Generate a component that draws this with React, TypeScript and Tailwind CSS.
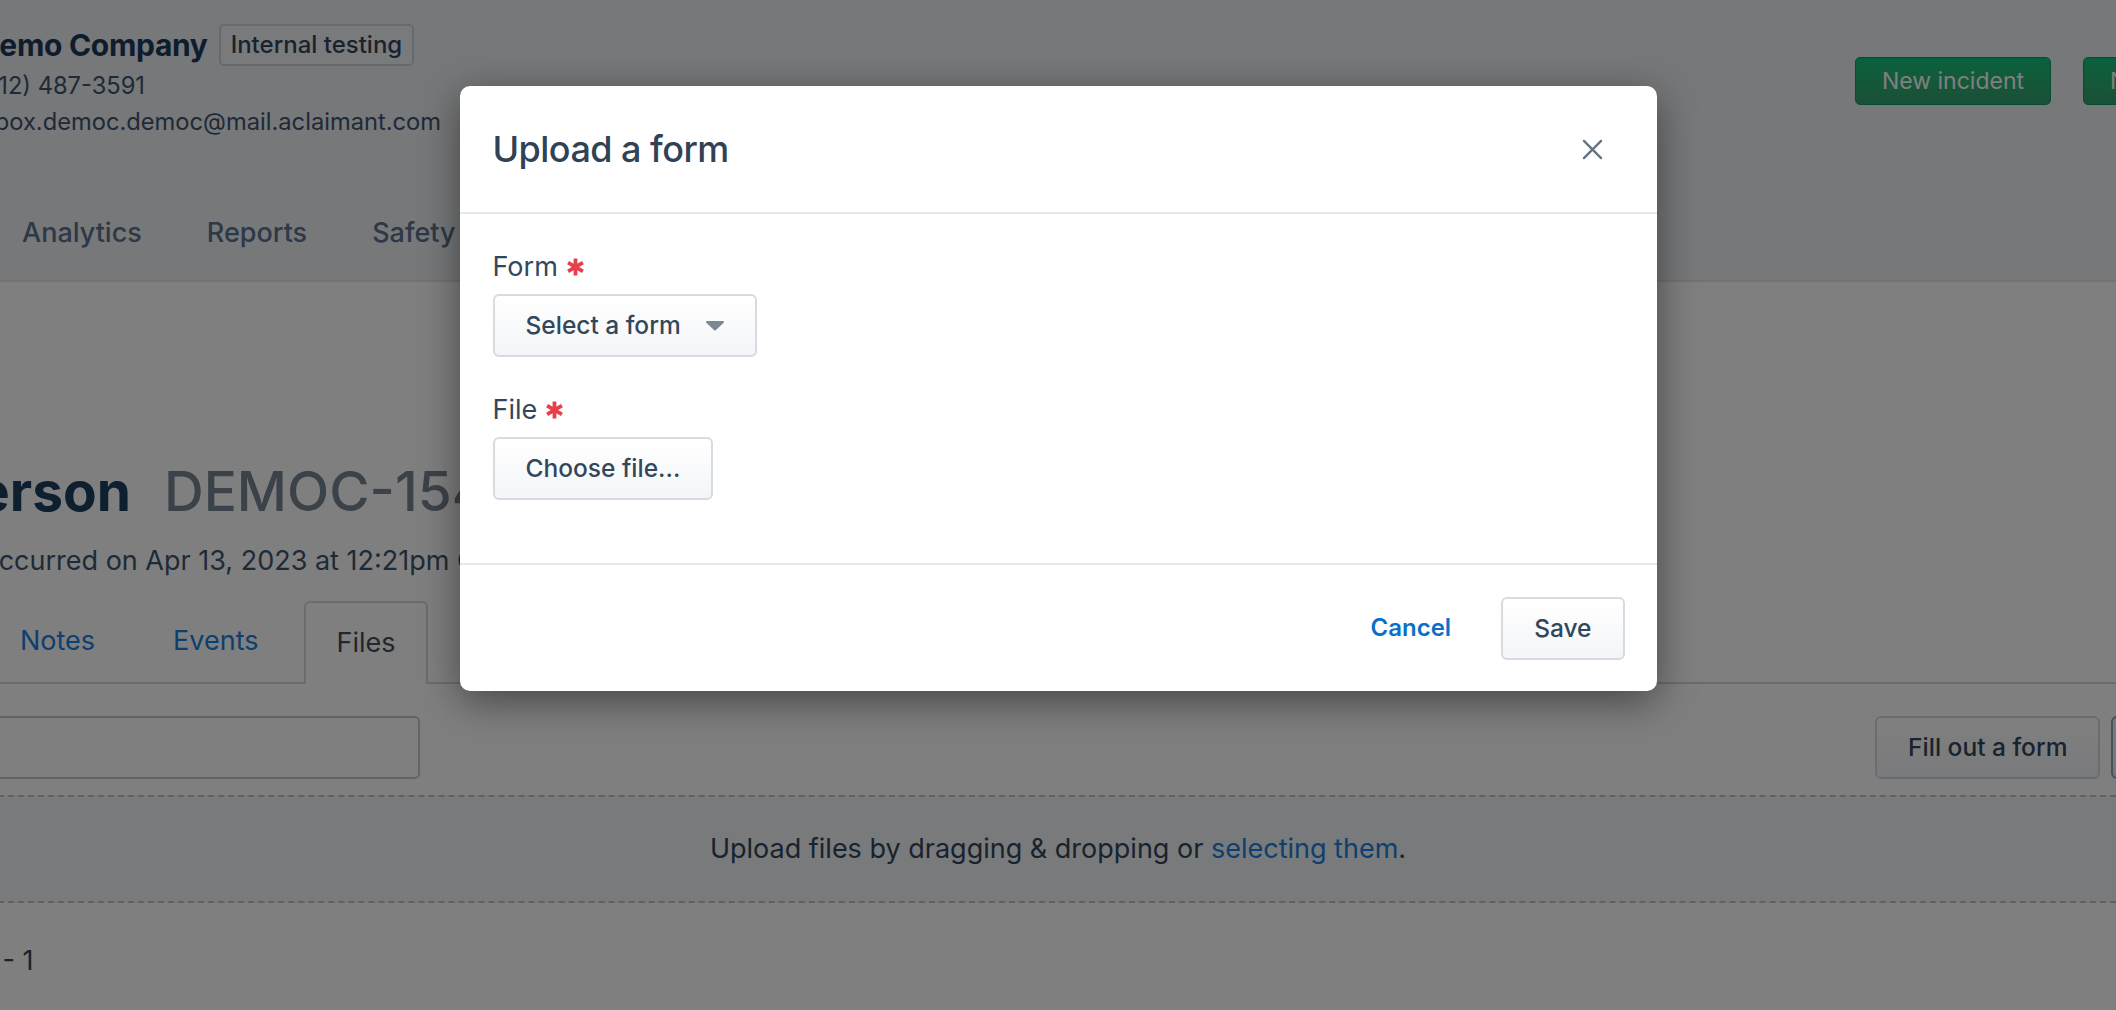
import { ReactNode } from 'react';

function RequiredMark() {
  return (
    <svg viewBox="0 0 20 20" className="h-[20px] w-[19px]" fill="none" stroke="#e5404b" strokeWidth={4}>
      <path d="M10 1v18M2.2 5.5l15.6 9M2.2 14.5l15.6-9" />
    </svg>
  );
}

function GhostButton({ children, className = '' }: { children: ReactNode; className?: string }) {
  return (
    <button
      type="button"
      className={`flex h-[63px] items-center rounded-[6px] border-2 border-[#d5dbe1] bg-gradient-to-b from-white to-[#f3f5f8] px-[31px] text-[24.5px] font-medium text-[#33475b] ${className}`}
    >
      {children}
    </button>
  );
}

function Field({ label, children }: { label: string; children: ReactNode }) {
  return (
    <div>
      <div className="mb-[8px] flex h-[38px] items-center gap-[8px] text-[27px] leading-[38px] text-[#33475b]">
        {label}
        <RequiredMark />
      </div>
      {children}
    </div>
  );
}

export default function App() {
  return (
    <div className="relative h-[1010px] w-[2116px] overflow-hidden bg-white font-['Inter',sans-serif] text-[#33475b]">
      {/* page underneath */}
      <header className="h-[282px] border-b-2 border-[#e1e5e9] bg-[#eef0f2]">
        <div className="flex items-start pt-[22px]">
          <div className="-ml-[22px]">
            <div className="flex h-[46px] items-center gap-[11px]">
              <h1 className="text-[30px] font-bold tracking-[-0.01em] text-[#1c3a5a]">Demo Company</h1>
              <span className="rounded-[5px] border-2 border-[#cfd5db] bg-[#f3f5f7] px-[10px] py-[1px] text-[24px] font-medium text-[#33475b]">
                Internal testing
              </span>
            </div>
            <div className="-ml-[3px] text-[23.7px] leading-[36px] text-[#3e5470]">
              <p>(312) 487-3591</p>
              <p>inbox.democ.democ@mail.aclaimant.com</p>
            </div>
          </div>
          <div className="-mr-[134px] ml-auto flex gap-[32px] pt-[35px]">
            <button type="button" className="h-[48px] rounded-[5px] border border-[#0b9a62] bg-gradient-to-b from-[#0ec27a] to-[#34a06e] px-[26px] text-[23px] text-white">
              New incident
            </button>
            <button type="button" className="h-[48px] rounded-[5px] border border-[#0b9a62] bg-gradient-to-b from-[#0ec27a] to-[#34a06e] px-[26px] text-[23px] text-white">
              New claim
            </button>
          </div>
        </div>
        <nav className="mt-[74px] flex gap-[65px] pl-[22px] text-[27px] font-medium leading-[38px] text-[#5a7290]">
          <span>Analytics</span>
          <span>Reports</span>
          <span>Safety</span>
          <span>Settings</span>
        </nav>
      </header>

      <main className="-ml-[22px]">
        <div className="mt-[176px] flex items-center text-[55px] leading-[66px]">
          <span className="flex w-[153px] justify-end overflow-hidden whitespace-nowrap font-bold text-[#1c3e60]">
            Sarah Anderson
          </span>
          <span className="ml-[33px] font-medium text-[#768492]">DEMOC-1547</span>
        </div>
        <p className="mt-[18px] text-[27px] leading-[38px] text-[#3e5470]">
          Occurred on Apr 13, 2023 at 12:21pm CDT
        </p>

        <div className="mt-[21px] flex gap-[14px] border-b-2 border-[#d3dae0] pl-[10px] text-[27px]">
          <span className="flex h-[81px] items-center px-[32px] text-[#1a80dc]">Notes</span>
          <span className="flex h-[81px] items-center px-[32px] text-[#1a80dc]">Events</span>
          <span className="-mb-[2px] flex h-[83px] items-center rounded-t-[6px] border-2 border-b-0 border-[#d3dae0] bg-white px-[30px] text-[#444e59]">
            Files
          </span>
        </div>

        <div className="mt-[32px] flex items-center">
          <div className="h-[63px] w-[442px] rounded-[5px] border-2 border-[#c3cad1] bg-white" />
          <div className="-mr-[145px] ml-auto flex gap-[11px]">
            <GhostButton className="px-[29px]">Fill out a form</GhostButton>
            <button type="button" className="h-[63px] rounded-[6px] border-2 border-[#8aa2bb] bg-[#eaf0f6] px-[31px] text-[24.5px] font-medium text-[#33475b]">
              Upload
            </button>
          </div>
        </div>

        <div className="mt-[16px] flex h-[108px] items-center justify-center border-y-2 border-dashed border-[#bfc3c8] bg-[#f3f4f7] pl-[22px] text-[27px] text-[#33475b]">
          <p>
            Upload files by dragging &amp; dropping or <span className="text-[#1a80dc]">selecting them</span>.
          </p>
        </div>

        <p className="mt-[39px] pl-[6px] text-[27px] leading-[38px] text-[#33475b]">1 - 1</p>
      </main>

      {/* overlay + modal */}
      <div className="absolute inset-0 bg-black/50" />
      <div className="absolute inset-0 flex justify-center pt-[86px]">
        <div className="h-fit w-[1197px] rounded-[10px] bg-white shadow-[0_10px_40px_rgba(0,0,0,0.45)]">
          <div className="flex h-[128px] items-center justify-between border-b-2 border-[#e4e8ec] pl-[33px] pr-[43px]">
            <h2 className="text-[36px] font-medium tracking-[-0.015em] text-[#2f4256]">Upload a form</h2>
            <button type="button" className="p-[11px]">
              <svg viewBox="0 0 22 22" className="h-[21px] w-[21px]" fill="none" stroke="#627384" strokeWidth={2.4} strokeLinecap="round">
                <path d="M2 2l18 18M20 2L2 20" />
              </svg>
            </button>
          </div>

          <div className="flex flex-col gap-[34px] px-[33px] pb-[63px] pt-[34px]">
            <Field label="Form">
              <GhostButton className="gap-[25px]">
                Select a form
                <svg viewBox="0 0 18 10" className="h-[10px] w-[18px]">
                  <path d="M1 0h16a1 1 0 0 1 .7 1.7L9.7 9.3a1 1 0 0 1-1.4 0L.3 1.7A1 1 0 0 1 1 0z" fill="#7d8894" />
                </svg>
              </GhostButton>
            </Field>
            <Field label="File">
              <GhostButton>Choose file...</GhostButton>
            </Field>
          </div>

          <div className="flex h-[128px] items-center justify-end gap-[50px] border-t-2 border-[#e4e8ec] pr-[32px]">
            <button type="button" className="text-[24px] font-semibold text-[#0a6fc8]">
              Cancel
            </button>
            <GhostButton className="px-[28px]">Save</GhostButton>
          </div>
        </div>
      </div>
    </div>
  );
}
